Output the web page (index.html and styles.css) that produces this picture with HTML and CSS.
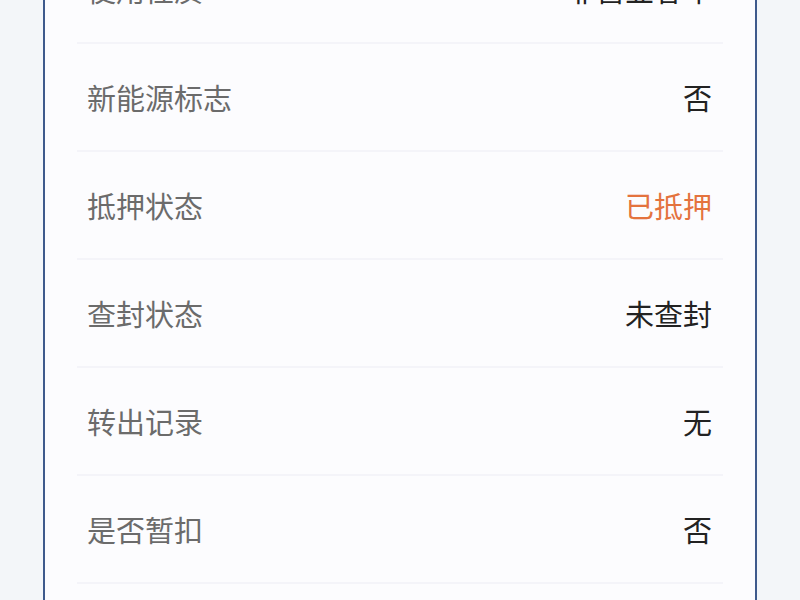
FILE: index.html
```html
<!DOCTYPE html>
<html lang="zh-CN">
<head>
<meta charset="utf-8">
<link rel="stylesheet" href="styles.css">
</head>
<body>
<div class="card">
  <div class="row"><span class="label">使用性质</span><span class="value">非营业客车</span></div>
  <div class="row"><span class="label">新能源标志</span><span class="value">否</span></div>
  <div class="row"><span class="label">抵押状态</span><span class="value warn">已抵押</span></div>
  <div class="row"><span class="label">查封状态</span><span class="value">未查封</span></div>
  <div class="row"><span class="label">转出记录</span><span class="value">无</span></div>
  <div class="row"><span class="label">是否暂扣</span><span class="value">否</span></div>
</div>
</body>
</html>
```
FILE: styles.css
```css
html, body {
  margin: 0;
  padding: 0;
  background: #f3f6f9;
  overflow: hidden;
  height: 600px;
}
body {
  font-family: "Noto Sans CJK SC", "Noto Sans", sans-serif;
}
.card {
  margin: -64px 0 0 43px;
  width: 714px;
  background: #fcfcfe;
  border-left: 2px solid #3e5a8c;
  border-right: 2px solid #3e5a8c;
  padding: 0 32px 60px;
  box-sizing: border-box;
}
.row {
  height: 108px;
  box-sizing: border-box;
  border-bottom: 2px solid #f4f4f9;
  display: flex;
  align-items: center;
  justify-content: space-between;
  padding: 0 11px 0 10px;
  font-size: 29px;
  line-height: 1;
}
.label {
  color: #6b6b6b;
}
.value {
  color: #222222;
}
.value.warn {
  color: #e4733e;
}
```
